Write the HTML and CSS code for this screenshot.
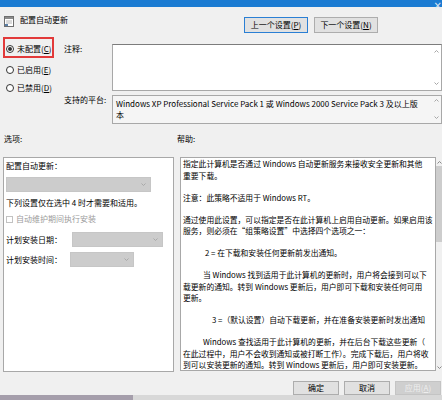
FILE: index.html
```html
<!DOCTYPE html>
<html lang="zh-CN">
<head>
<meta charset="utf-8">
<title>配置自动更新</title>
<link rel="stylesheet" href="styles.css">
</head>
<body>
<div class="window">
  <div class="titlebar"><span class="close">×</span></div>

  <div class="header">
    <div class="title">
      <svg class="policy-icon" viewBox="0 0 10 11" width="10" height="11">
        <rect x="0.5" y="0.5" width="9" height="10" fill="#ffffff" stroke="#6f6f6f"/>
        <rect x="1" y="1" width="8" height="2" fill="#8c8c8c"/>
        <line x1="2" y1="5" x2="8" y2="5" stroke="#b4b4b4"/>
        <line x1="2" y1="7" x2="8" y2="7" stroke="#b4b4b4"/>
        <rect x="1" y="8" width="3" height="2" fill="#5b7fa6"/>
      </svg>
      <span class="title-text">配置自动更新</span>
    </div>
    <div class="nav">
      <button class="btn btn-default">上一个设置(<u>P</u>)</button>
      <button class="btn">下一个设置(<u>N</u>)</button>
    </div>
  </div>

  <div class="top">
    <div class="radios">
      <div class="radio focused"><span class="circle checked"></span>未配置(<u>C</u>)</div>
      <div class="radio second"><span class="circle"></span>已启用(<u>E</u>)</div>
      <div class="radio"><span class="circle"></span>已禁用(<u>D</u>)</div>
    </div>
    <div class="fields">
      <div class="field">
        <span class="field-label">注释:</span>
        <div class="box box-comment">
          <div class="box-text"></div>
          <div class="mini-scroll comment-scroll">
            <svg class="chev" viewBox="0 0 5 3" width="5" height="3"><polyline points="0.5,2.5 2.5,0.5 4.5,2.5" fill="none" stroke="#a6a6a6"/></svg>
            <svg class="chev" viewBox="0 0 5 3" width="5" height="3"><polyline points="0.5,0.5 2.5,2.5 4.5,0.5" fill="none" stroke="#a6a6a6"/></svg>
          </div>
        </div>
      </div>
      <div class="field">
        <span class="field-label">支持的平台:</span>
        <div class="box box-platform">
          <div class="box-text">Windows XP Professional Service Pack 1 或 Windows 2000 Service Pack 3 及以上版<br>本</div>
          <div class="mini-scroll platform-scroll">
            <svg class="chev" viewBox="0 0 5 3" width="5" height="3"><polyline points="0.5,2.5 2.5,0.5 4.5,2.5" fill="none" stroke="#a6a6a6"/></svg>
            <svg class="chev" viewBox="0 0 5 3" width="5" height="3"><polyline points="0.5,0.5 2.5,2.5 4.5,0.5" fill="none" stroke="#a6a6a6"/></svg>
          </div>
        </div>
      </div>
    </div>
  </div>

  <div class="section-labels">
    <span class="lbl-opt">选项:</span>
    <span class="lbl-help">帮助:</span>
  </div>

  <div class="panels">
    <div class="options">
      <div class="opt-label">配置自动更新：</div>
      <div class="select select-wide">
        <svg class="chev" viewBox="0 0 5 3" width="5" height="3"><polyline points="0.5,0.5 2.5,2.5 4.5,0.5" fill="none" stroke="#a9a9a9"/></svg>
      </div>
      <div class="opt-note">下列设置仅在选中 4 时才需要和适用。</div>
      <div class="check-row"><span class="checkbox"></span><span class="disabled-text">自动维护期间执行安装</span></div>
      <div class="sched-row row-date">
        <span class="sched-label">计划安装日期：</span>
        <div class="select select-date">
          <svg class="chev" viewBox="0 0 5 3" width="5" height="3"><polyline points="0.5,0.5 2.5,2.5 4.5,0.5" fill="none" stroke="#a9a9a9"/></svg>
        </div>
      </div>
      <div class="sched-row row-time">
        <span class="sched-label">计划安装时间：</span>
        <div class="select select-time">
          <svg class="chev" viewBox="0 0 5 3" width="5" height="3"><polyline points="0.5,0.5 2.5,2.5 4.5,0.5" fill="none" stroke="#a9a9a9"/></svg>
        </div>
      </div>
    </div>

    <div class="help">
      <p>指定此计算机是否通过 Windows 自动更新服务来接收安全更新和其他<br>重要下载。</p>
      <p>注意：此策略不适用于 Windows RT。</p>
      <p>通过使用此设置，可以指定是否在此计算机上启用自动更新。如果启用该<br>服务，则必须在“组策略设置”中选择四个选项之一：</p>
      <p class="indent-opt">2 = 在下载和安装任何更新前发出通知。</p>
      <p class="indent">当 Windows 找到适用于此计算机的更新时，用户将会接到可以下<br>载更新的通知。转到 Windows 更新后，用户即可下载和安装任何可用<br>更新。</p>
      <p class="indent-opt3">3 =（默认设置）自动下载更新，并在准备安装更新时发出通知</p>
      <p class="indent">Windows 查找适用于此计算机的更新，并在后台下载这些更新（<br>在此过程中，用户不会收到通知或被打断工作）。完成下载后，用户将收<br>到可以安装更新的通知。转到 Windows 更新后，用户即可安装更新。</p>
    </div>

    <div class="vscroll">
      <svg class="chev" viewBox="0 0 5 3" width="5" height="3"><polyline points="0.5,2.5 2.5,0.5 4.5,2.5" fill="none" stroke="#8a8a8a"/></svg>
      <div class="thumb"></div>
      <svg class="chev down" viewBox="0 0 5 3" width="5" height="3"><polyline points="0.5,0.5 2.5,2.5 4.5,0.5" fill="none" stroke="#8a8a8a"/></svg>
    </div>
  </div>

  <div class="footer">
    <button class="btn btn-foot">确定</button>
    <button class="btn btn-foot">取消</button>
    <button class="btn btn-foot btn-disabled">应用(<u>A</u>)</button>
  </div>

  <div class="taskbar"></div>
</div>
</body>
</html>
```

FILE: styles.css
```css
* { box-sizing: border-box; }

html, body {
  margin: 0;
  padding: 0;
}

body {
  width: 442px;
  height: 400px;
  overflow: hidden;
  background: #f0f0f0;
  font-family: "Noto Sans CJK SC", "Noto Sans", sans-serif;
  font-size: 8px;
  color: #000;
}

.window {
  position: relative;
  width: 442px;
  height: 400px;
  display: flex;
  flex-direction: column;
}

/* title bar */
.titlebar {
  flex: none;
  height: 7px;
  background: #1b7bd2;
}

.close {
  position: absolute;
  right: 0;
  top: 1px;
  font-family: "DejaVu Sans", sans-serif;
  font-size: 10px;
  line-height: 10px;
  color: #dfe8f2;
}

/* header */
.header {
  flex: none;
  height: 30px;
  display: flex;
  justify-content: space-between;
  padding: 8px 64px 0 4px;
}

.title {
  display: flex;
  align-items: flex-start;
  gap: 6px;
}

.policy-icon {
  display: block;
  margin-top: 1px;
}

.title-text {
  line-height: 10px;
}

.nav {
  display: flex;
  gap: 6px;
  margin-top: 2px;
}

.btn {
  width: 64px;
  height: 16px;
  padding: 0;
  border: 1px solid #adadad;
  background: #e1e1e1;
  font-family: inherit;
  font-size: 8px;
  line-height: 14px;
  color: #000;
}

.btn-default {
  border-color: #2a7fd4;
}

/* top section */
.top {
  flex: none;
  height: 89px;
  display: flex;
}

.radios {
  width: 61px;
  padding-left: 3px;
  display: flex;
  flex-direction: column;
}

.radio {
  height: 18px;
  padding-left: 3px;
  display: flex;
  align-items: center;
  line-height: 10px;
  white-space: nowrap;
}

.radio.focused {
  width: 51px;
  height: 21px;
  border: 2px solid #e23a3a;
  padding: 5px 0 2px 1px;
}

.radio.second {
  margin-top: 3px;
}

.circle {
  width: 8px;
  height: 8px;
  border: 1px solid #333;
  border-radius: 50%;
  background: #fff;
  margin-right: 3px;
  flex: none;
  display: flex;
  align-items: center;
  justify-content: center;
}

.circle.checked::after {
  content: "";
  width: 4px;
  height: 4px;
  border-radius: 50%;
  background: #333;
}

.fields {
  flex: 1;
  padding-top: 7px;
  display: flex;
  flex-direction: column;
  gap: 4px;
}

.field {
  display: flex;
}

.field-label {
  width: 51px;
  padding-left: 3px;
  line-height: 10px;
  white-space: nowrap;
}

.box {
  flex: 1;
  display: flex;
  border: 1px solid #a8a8a8;
  background: #fff;
}

.box-comment {
  height: 47px;
  border-top-color: #7c7c7c;
}

.box-platform {
  height: 29px;
  background: #f5f5f5;
}

.box-text {
  flex: 1;
  padding: 2px 3px;
  line-height: 11px;
  white-space: nowrap;
  overflow: hidden;
}

.mini-scroll {
  width: 9px;
  flex: none;
  display: flex;
  flex-direction: column;
  justify-content: space-between;
  align-items: center;
}

.comment-scroll { padding: 5px 0; }
.platform-scroll { padding: 3px 0 4px; }

.chev { display: block; }

/* section labels */
.section-labels {
  flex: none;
  height: 31px;
  display: flex;
  padding: 8px 0 0 4px;
  line-height: 10px;
}

.lbl-opt { width: 173px; }

/* panels */
.panels {
  flex: none;
  height: 215px;
  display: flex;
  padding-left: 3px;
}

.options {
  width: 171px;
  height: 215px;
  border: 1px solid #a8a8a8;
  background: #fff;
  padding: 3px 2px 0;
  line-height: 10px;
  white-space: nowrap;
}

.select {
  height: 15px;
  background: #cccccc;
  border: 1px solid #c6c6c6;
  display: flex;
  align-items: center;
  justify-content: flex-end;
  padding-right: 4px;
}

.select-wide {
  width: 145px;
  margin-top: 6px;
}

.opt-note { margin-top: 6px; }

.check-row {
  margin-top: 6px;
  height: 10px;
  display: flex;
  align-items: center;
  gap: 3px;
}

.checkbox {
  width: 7px;
  height: 7px;
  border: 1px solid #c2c2c2;
  background: #fff;
}

.disabled-text { color: #9b9b9b; }

.sched-row {
  height: 15px;
  display: flex;
  align-items: center;
}

.row-date { margin-top: 8px; }
.row-time { margin-top: 5px; }

.sched-label { width: 64px; }

.select-date {
  width: 91px;
  margin-left: 2px;
}

.select-time {
  width: 64px;
}

.help {
  width: 256px;
  height: 214px;
  margin-left: 6px;
  border: 1px solid #a8a8a8;
  background: #fff;
  padding: 0 1px 0 2px;
  overflow: hidden;
  white-space: nowrap;
  font-size: 7.8px;
  line-height: 11.5px;
}

.help p {
  margin: 0 0 10.5px;
}

.help .indent { text-indent: 20px; }
.help .indent-opt { text-indent: 22px; }
.help .indent-opt3 { text-indent: 29px; }

.vscroll {
  width: 6px;
  height: 215px;
  display: flex;
  flex-direction: column;
  align-items: center;
  padding: 4px 0 3px;
}

.thumb {
  width: 6px;
  height: 76px;
  margin-top: 2px;
  background: #cdcdcd;
}

.vscroll .down { margin-top: auto; }

/* footer */
.footer {
  flex: none;
  height: 23px;
  display: flex;
  justify-content: flex-end;
  gap: 5px;
  padding: 9px 1px 0 0;
}

.btn-foot {
  width: 46px;
  height: 14px;
  line-height: 12px;
}

.btn-disabled {
  background: #cfcfcf;
  border-color: #c4c4c4;
  color: #eeeeee;
}

.taskbar {
  flex: none;
  height: 5px;
  background: linear-gradient(to right, #a59eab 0, #a59eab 133px, #d8d8d8 133px, #d8d8d8 100%);
}
```
